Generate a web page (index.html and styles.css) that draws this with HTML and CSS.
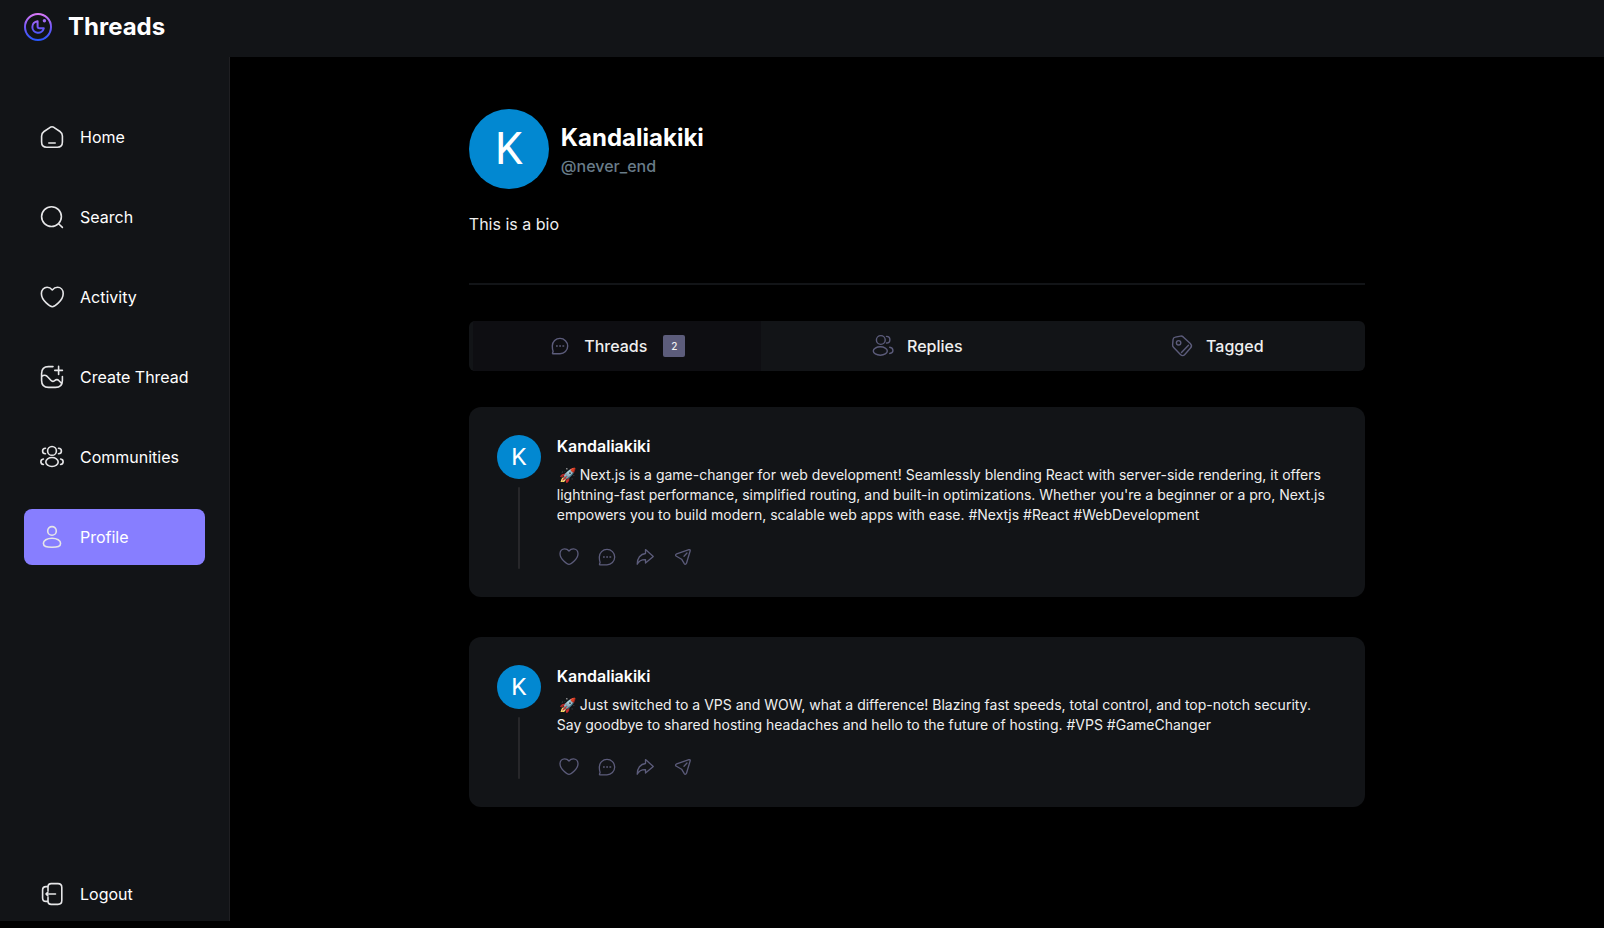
FILE: index.html
```html
<!DOCTYPE html>
<html lang="en">
<head>
    <meta charset="UTF-8">
    <meta name="viewport" content="width=device-width, initial-scale=1.0">
    <title>Threads</title>
    <link rel="stylesheet" href="styles.css">
</head>
<body>
    <!-- shared icons -->
    <svg class="sprite" aria-hidden="true">
        <symbol id="heart" viewBox="0 0 24 24">
            <path d="M12 19.4C10.8 19.4 3 14.6 3 8.8C3 5.8 5 3.8 7.6 3.8C9.4 3.8 11 4.7 12 6C13 4.7 14.6 3.8 16.4 3.8C19 3.8 21 5.8 21 8.8C21 14.6 13.2 19.4 12 19.4Z"/>
        </symbol>
        <symbol id="comment" viewBox="0 0 24 24">
            <path d="M12 4.4A7.7 7.7 0 1 1 12 19.8H4.8Q4.3 19.8 4.5 19.3L5.1 17.4Q4.3 15 4.3 12A7.7 7.7 0 0 1 12 4.4Z"/>
            <path class="dots" d="M8 12H9.8M11.2 12H13M14.4 12H16.2"/>
        </symbol>
        <symbol id="share" viewBox="0 0 24 24">
            <path d="M12.5 8.5V4.6L20.3 11.4L12.5 18V14.6C8.6 14.4 6 15.8 4.2 19.2C4.2 13.2 7.4 8.9 12.5 8.5Z"/>
        </symbol>
        <symbol id="send" viewBox="0 0 24 24">
            <path d="M5.7 8.9L17.9 4.7C18.8 4.4 19.4 4.9 19.2 5.8L15.5 18.2C15.2 19.4 14 19.6 13.3 18.6L10.6 14.2L5.4 11.3C4.1 10.6 4.4 9.4 5.7 8.9ZM13 11.2L16 8"/>
        </symbol>
    </svg>

    <header class="topbar">
        <a href="#" class="brand">
            <svg class="logo" viewBox="0 0 28 28" fill="none">
                <defs>
                    <linearGradient id="logoFill" gradientUnits="userSpaceOnUse" x1="14" y1="0" x2="14" y2="28">
                        <stop offset="0" stop-color="#e07bf8"/>
                        <stop offset="0.5" stop-color="#7257f5"/>
                        <stop offset="1" stop-color="#2457ff"/>
                    </linearGradient>
                </defs>
                <g stroke="url(#logoFill)" stroke-width="2">
                    <circle cx="14" cy="14" r="13"/>
                    <path d="M13.6 8.2A5.8 5.8 0 1 0 19.8 15.3H15.4Q13.6 15.3 13.6 13.5Z" stroke-linejoin="round"/>
                </g>
                <circle cx="20.4" cy="7.8" r="1.7" fill="#a06cf8"/>
            </svg>
            <span>Threads</span>
        </a>
    </header>

    <div class="layout">
        <aside class="sidebar">
            <nav class="menu">
                <a href="#" class="menu-link">
                    <svg class="icon" viewBox="0 0 24 24"><path d="M4 6.5L10.2 2.3Q12 1.2 13.8 2.3L20 6.5Q22.4 8.2 22.4 11V17Q22.4 22.2 17.4 22.2H6.6Q1.6 22.2 1.6 17V11Q1.6 8.2 4 6.5ZM8.8 18H15.2"/></svg>
                    <span>Home</span>
                </a>
                <a href="#" class="menu-link">
                    <svg class="icon" viewBox="0 0 24 24"><path d="M11.5 1.7A9.9 9.9 0 1 1 11.5 21.5A9.9 9.9 0 0 1 11.5 1.7ZM18.6 18.7L22.4 22.4"/></svg>
                    <span>Search</span>
                </a>
                <a href="#" class="menu-link">
                    <svg class="icon" viewBox="0 0 24 24"><path d="M12.3 21.7C10.6 21.7 1.4 16 1.4 8.5C1.4 4.8 4 2.2 7.1 2.2C9.1 2.2 10.9 3.2 12.3 4.9C13.7 3.2 15.4 2.2 17.5 2.2C20.7 2.2 23.2 4.8 23.2 8.5C23.2 16 14 21.7 12.3 21.7Z"/></svg>
                    <span>Activity</span>
                </a>
                <a href="#" class="menu-link">
                    <svg class="icon" viewBox="0 0 24 24"><path d="M13 1.6H8.5Q1.6 1.6 1.6 8.5V15.5Q1.6 22.4 8.5 22.4H15.5Q22.4 22.4 22.4 15.5V11.5M18.6 1.4V9.4M14.8 5.4H22.4M1.8 11.5C3.8 9.8 6 9.8 7.8 12L10.8 15.3C12 16.6 13.2 16.7 14.6 15.6C16.2 14.4 17.8 14.5 19 15.7L21.5 18.3"/></svg>
                    <span>Create Thread</span>
                </a>
                <a href="#" class="menu-link">
                    <svg class="icon" viewBox="0 0 24 24"><circle cx="12" cy="5.9" r="4.4"/><ellipse cx="12" cy="17" rx="6.2" ry="4.5"/><path d="M5.5 3.3C1.6 3.3 1.6 8.8 5.5 8.8M18.5 3.3C22.4 3.3 22.4 8.8 18.5 8.8M3.4 14C0 14.5 0 19 3.4 19.5M20.6 14C24 14.5 24 19 20.6 19.5"/></svg>
                    <span>Communities</span>
                </a>
                <a href="#" class="menu-link active">
                    <svg class="icon" viewBox="0 0 24 24"><circle cx="12" cy="5.9" r="4.3"/><path d="M12 13.3C17 13.3 20.6 15.4 20.6 18.3C20.6 21.8 17.6 22.3 12 22.3C6.4 22.3 3.4 21.8 3.4 18.3C3.4 15.4 7 13.3 12 13.3Z"/></svg>
                    <span>Profile</span>
                </a>
            </nav>
            <button type="button" class="logout">
                <svg class="icon" viewBox="0 0 24 24"><path d="M8 5V4.8Q8 1.6 11.2 1.6H18Q21.8 1.6 21.8 5.4V18.6Q21.8 22.4 18 22.4H11.2Q8 22.4 8 19.2V15.5M8 8.7V4.6H6Q2.6 4.6 2.6 8V16Q2.6 19.4 6 19.4H8M15.5 12H6M8 10L6 12L8 14"/></svg>
                <span>Logout</span>
            </button>
        </aside>

        <main class="content">
            <div class="container">
                <section class="profile">
                    <div class="profile-head">
                        <div class="avatar avatar-large">K</div>
                        <div>
                            <h1>Kandaliakiki</h1>
                            <p class="handle">@never_end</p>
                        </div>
                    </div>
                    <p class="bio">This is a bio</p>
                    <hr>
                </section>

                <div class="tabs" role="tablist">
                    <button type="button" role="tab" class="tab selected" aria-selected="true">
                        <svg class="icon"><use href="#comment"/></svg>
                        <span>Threads</span>
                        <span class="count">2</span>
                    </button>
                    <button type="button" role="tab" class="tab">
                        <svg class="icon" viewBox="0 0 24 24"><circle cx="9.8" cy="6" r="4.4"/><ellipse cx="9.3" cy="17" rx="7" ry="4.2"/><path d="M15.5 2.4C20 2.4 20 9 15.5 9M18.7 13.3C23 14 23 18.9 18.7 19.5"/></svg>
                        <span>Replies</span>
                    </button>
                    <button type="button" role="tab" class="tab">
                        <svg class="icon" viewBox="0 0 24 24"><path d="M5.3 3.1L10.6 2.1Q12 1.9 13.2 2.9L20.3 9.4Q22.6 11.7 20.5 14L14.8 20.5Q12.7 22.8 10.4 20.5L3.7 13.5Q2.4 12.2 2.6 10.8L3.1 5.3Q3.3 3.4 5.3 3.1ZM11.5 18.5L18.5 11.3"/><circle cx="8.6" cy="8.8" r="2.2"/></svg>
                        <span>Tagged</span>
                    </button>
                </div>

                <section class="threads">
                    <article class="card">
                        <div class="card-side">
                            <div class="avatar">K</div>
                            <div class="thread-line"></div>
                        </div>
                        <div class="card-body">
                            <h2><a href="#">Kandaliakiki</a></h2>
                            <p>🚀 Next.js is a game-changer for web development! Seamlessly blending React with server-side rendering, it offers lightning-fast performance, simplified routing, and built-in optimizations. Whether you're a beginner or a pro, Next.js empowers you to build modern, scalable web apps with ease. #Nextjs #React #WebDevelopment</p>
                            <div class="actions">
                                <button type="button" aria-label="Like"><svg class="icon"><use href="#heart"/></svg></button>
                                <button type="button" aria-label="Reply"><svg class="icon"><use href="#comment"/></svg></button>
                                <button type="button" aria-label="Repost"><svg class="icon"><use href="#share"/></svg></button>
                                <button type="button" aria-label="Share"><svg class="icon"><use href="#send"/></svg></button>
                            </div>
                        </div>
                    </article>

                    <article class="card">
                        <div class="card-side">
                            <div class="avatar">K</div>
                            <div class="thread-line"></div>
                        </div>
                        <div class="card-body">
                            <h2><a href="#">Kandaliakiki</a></h2>
                            <p>🚀 Just switched to a VPS and WOW, what a difference! Blazing fast speeds, total control, and top-notch security. Say goodbye to shared hosting headaches and hello to the future of hosting. #VPS #GameChanger</p>
                            <div class="actions">
                                <button type="button" aria-label="Like"><svg class="icon"><use href="#heart"/></svg></button>
                                <button type="button" aria-label="Reply"><svg class="icon"><use href="#comment"/></svg></button>
                                <button type="button" aria-label="Repost"><svg class="icon"><use href="#share"/></svg></button>
                                <button type="button" aria-label="Share"><svg class="icon"><use href="#send"/></svg></button>
                            </div>
                        </div>
                    </article>
                </section>
            </div>
        </main>
    </div>
</body>
</html>
```
FILE: styles.css
```css
* {
    box-sizing: border-box;
    margin: 0;
    padding: 0;
}
body {
    display: flex;
    flex-direction: column;
    min-height: 100vh;
    padding-bottom: 7px;
    background: #000;
    color: #fff;
    font-family: Inter, "Liberation Sans", sans-serif;
    font-size: 16px;
    line-height: 22px;
}
a {
    color: inherit;
    text-decoration: none;
}
button {
    background: none;
    border: none;
    color: inherit;
    font: inherit;
    cursor: pointer;
}
.sprite {
    display: none;
}
.icon {
    display: block;
    flex: none;
    width: 24px;
    height: 24px;
    fill: none;
    stroke: currentColor;
    stroke-width: 1.6;
    stroke-linecap: round;
    stroke-linejoin: round;
}

/* top bar */
.topbar {
    display: flex;
    align-items: center;
    padding: 10px 24px 13px;
    background: #121417;
}
.brand {
    display: flex;
    align-items: center;
    gap: 16px;
    font-size: 24px;
    font-weight: 700;
    line-height: 34px;
}
.logo {
    width: 28px;
    height: 28px;
}

.layout {
    display: flex;
    flex: 1;
}

/* sidebar */
.sidebar {
    display: flex;
    flex-direction: column;
    justify-content: space-between;
    flex: none;
    padding: 52px 24px 0;
    background: #121417;
    border-right: 1px solid #1f1f22;
}
.menu {
    display: flex;
    flex-direction: column;
    gap: 24px;
}
.menu-link,
.logout {
    display: flex;
    align-items: center;
    gap: 16px;
    padding: 16px;
    border-radius: 8px;
    line-height: 24px;
}
.logout {
    padding-bottom: 15px;
}
.menu-link .icon,
.logout .icon {
    color: #e6e6e8;
}
.active {
    background: #877eff;
}

/* profile */
.content {
    flex: 1;
    padding: 52px 24px 40px;
}
.container {
    max-width: 896px;
    margin: 0 auto;
}
.profile-head {
    display: flex;
    align-items: center;
    gap: 12px;
}
.avatar {
    display: flex;
    align-items: center;
    justify-content: center;
    flex: none;
    width: 44px;
    height: 44px;
    border-radius: 50%;
    background: #0288d1;
    font-family: Roboto, sans-serif;
    font-size: 24px;
}
.avatar-large {
    width: 80px;
    height: 80px;
    font-size: 44px;
}
h1 {
    font-size: 24px;
    font-weight: 700;
    line-height: 34px;
}
.handle {
    color: #697c89;
    font-weight: 500;
}
.bio {
    margin-top: 24px;
    color: #efefef;
}
hr {
    height: 2px;
    margin-top: 48px;
    border: none;
    background: #121417;
}

/* tabs */
.tabs {
    display: grid;
    grid-template-columns: repeat(3, 1fr);
    gap: 12px;
    height: 50px;
    margin-top: 36px;
    padding: 0 4px;
    border-radius: 6px;
    background: #121417;
}
.tab {
    display: flex;
    align-items: center;
    justify-content: center;
    gap: 12px;
    color: #efefef;
    font-weight: 500;
}
.tab .icon {
    color: #5c5c7b;
    stroke-width: 1.4;
}
.selected {
    background: #0e0e12;
}
.count {
    width: 22px;
    margin-left: 4px;
    border-radius: 2px;
    background: #5c5c7b;
    font-size: 10px;
}

/* thread cards */
.threads {
    display: flex;
    flex-direction: column;
    gap: 40px;
    margin-top: 36px;
}
.card {
    display: flex;
    gap: 16px;
    padding: 28px;
    border-radius: 12px;
    background: #121417;
}
.card-side {
    display: flex;
    flex-direction: column;
    align-items: center;
    gap: 8px;
}
.thread-line {
    flex: 1;
    width: 2px;
    border-radius: 2px;
    background: #27272a;
}
.card-body {
    flex: 1;
}
h2 {
    font-size: 16px;
    font-weight: 600;
    line-height: 22px;
}
.card-body p {
    margin-top: 8px;
    color: #efefef;
    font-size: 14px;
    line-height: 20px;
    text-indent: 2px;
}
.actions {
    display: flex;
    gap: 14px;
    margin-top: 20px;
    color: #5c5c7b;
}
.actions .icon {
    stroke-width: 1.3;
}
.dots {
    stroke-width: 2;
    stroke-linecap: butt;
    opacity: 0.7;
}
```
